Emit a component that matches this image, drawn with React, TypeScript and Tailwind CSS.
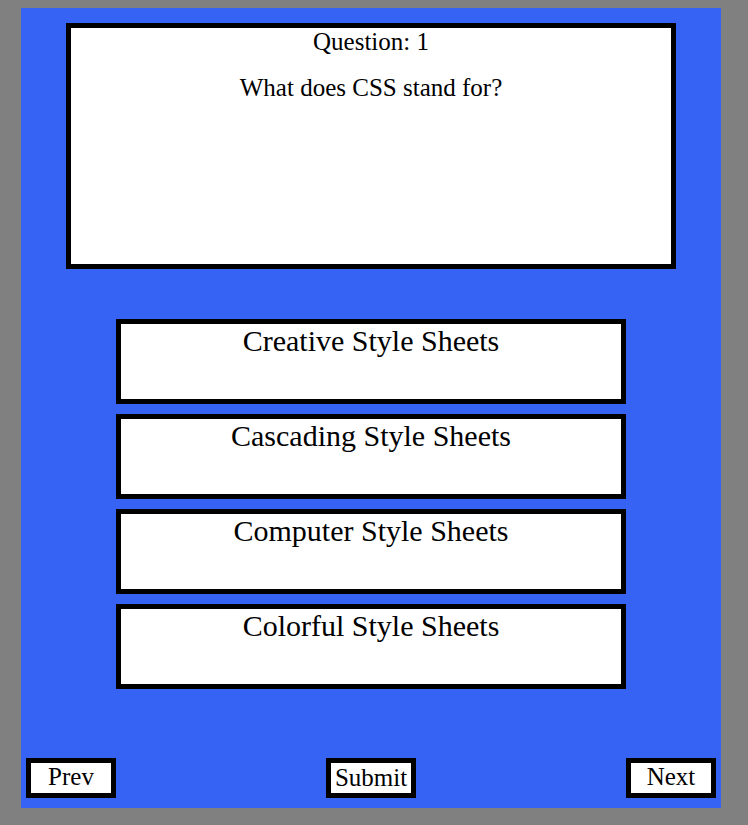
import React from 'react'

const answers = [
  'Creative Style Sheets',
  'Cascading Style Sheets',
  'Computer Style Sheets',
  'Colorful Style Sheets',
]

const App = () => {
  return (
    <div className="min-h-[825px] w-full bg-[#808080] pt-[8px] pl-[21px] text-black" style={{ fontFamily: '"Liberation Serif", "Times New Roman", serif' }}>
      <div className="flex h-[800px] w-[700px] flex-col bg-[#3763f4]">
        <div className="mx-auto mt-[15px] h-[246px] w-[610px] border-[5px] border-black bg-white text-center text-[25px] leading-[28px]">
          <p>Question: 1</p>
          <p className="mt-[18px]">What does CSS stand for?</p>
        </div>

        <div className="mx-auto mt-[50px] flex w-[510px] flex-col gap-[10px]">
          {answers.map((a) => (
            <button
              key={a}
              type="button"
              className="flex h-[85px] w-full items-start justify-center border-[5px] border-black bg-white text-[30px] leading-[34px]"
            >
              {a}
            </button>
          ))}
        </div>

        <div className="mt-[69px] flex items-center justify-between px-[5px]">
          <button type="button" className="h-[40px] w-[90px] border-[5px] border-black bg-white pb-[2px] text-[25px] leading-[28px]">
            Prev
          </button>
          <button type="button" className="h-[40px] w-[90px] border-[5px] border-black bg-white text-[25px] leading-[28px]">
            Submit
          </button>
          <button type="button" className="h-[40px] w-[90px] border-[5px] border-black bg-white pb-[2px] text-[25px] leading-[28px]">
            Next
          </button>
        </div>
      </div>
    </div>
  )
}

export default App
